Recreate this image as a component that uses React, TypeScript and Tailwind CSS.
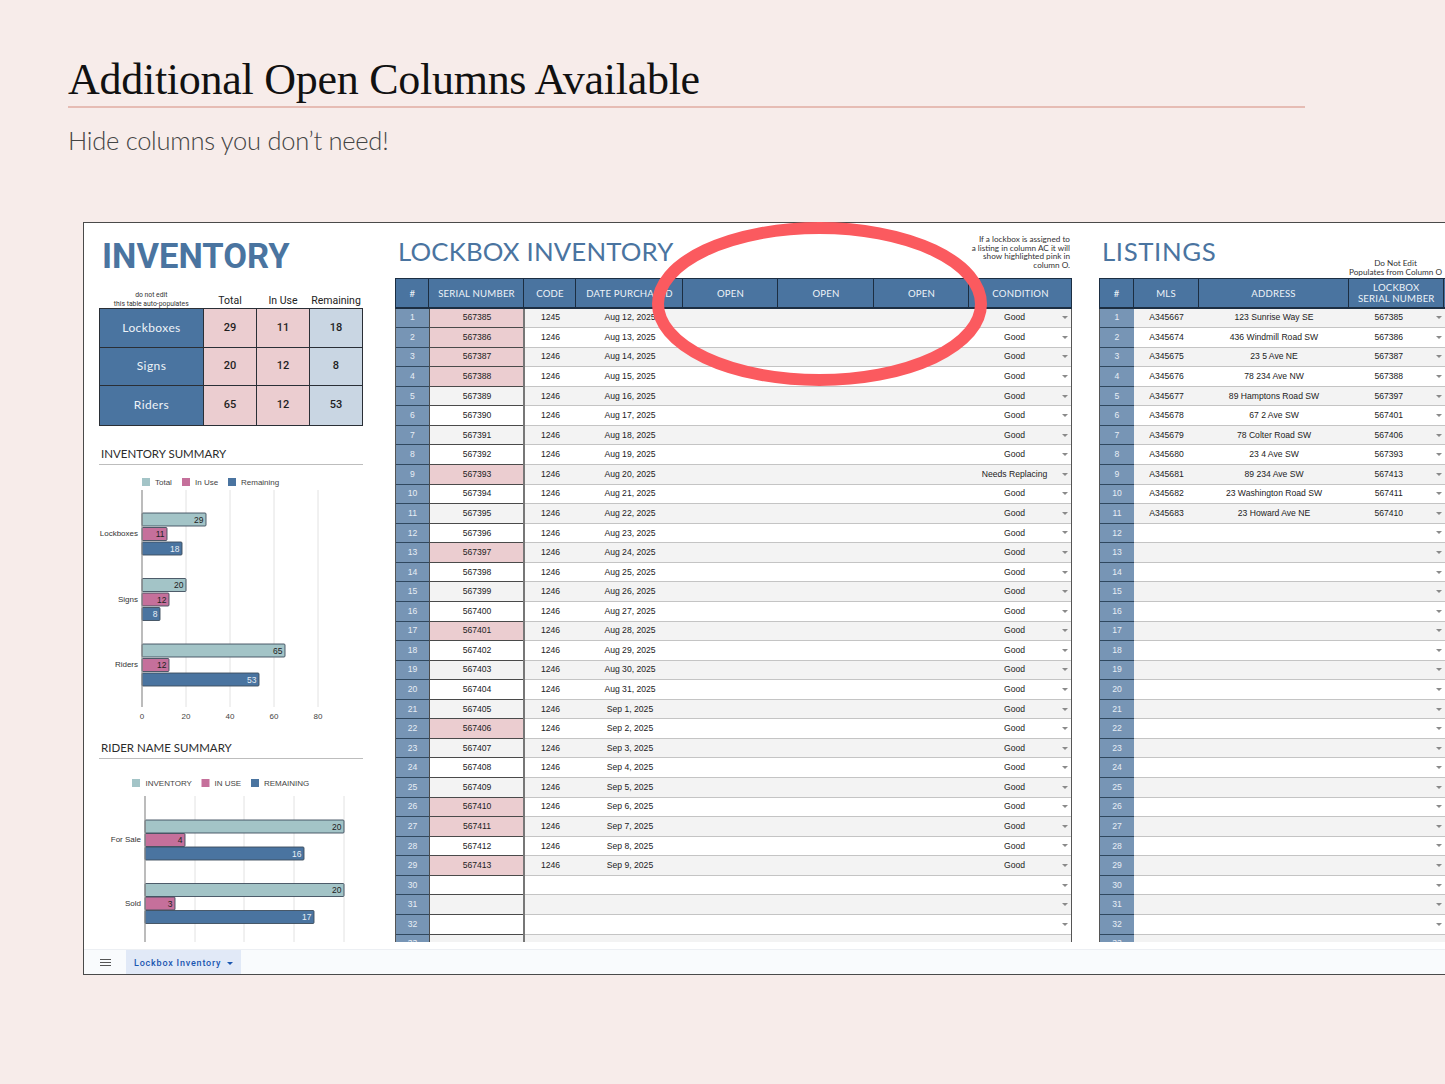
const SANS = "font-['Liberation_Sans',Arial,sans-serif]";
const ROUND = "font-['Lato','Open_Sans',sans-serif]";

const PINK_ROWS = [1, 2, 3, 4, 9, 13, 17, 22, 26, 27, 29];

const listings = [
  ["A345667", "123 Sunrise Way SE", "567385"],
  ["A345674", "436 Windmill Road SW", "567386"],
  ["A345675", "23 5 Ave NE", "567387"],
  ["A345676", "78 234 Ave NW", "567388"],
  ["A345677", "89 Hamptons Road SW", "567397"],
  ["A345678", "67 2 Ave SW", "567401"],
  ["A345679", "78 Colter Road SW", "567406"],
  ["A345680", "23 4 Ave SW", "567393"],
  ["A345681", "89 234 Ave SW", "567413"],
  ["A345682", "23 Washington Road SW", "567411"],
  ["A345683", "23 Howard Ave NE", "567410"],
];

const purchaseDate = (n: number) =>
  n <= 20 ? `Aug ${n + 11}, 2025` : `Sep ${n - 20}, 2025`;

const Arrow = () => (
  <svg width="6" height="3" viewBox="0 0 6 3" className="shrink-0">
    <path d="M0 0h6L3 3z" fill="#8a8a8a" />
  </svg>
);

const summary = [
  ["Lockboxes", "29", "11", "18"],
  ["Signs", "20", "12", "8"],
  ["Riders", "65", "12", "53"],
];

const Bar = ({
  x,
  y,
  w,
  fill,
  label,
  light,
}: {
  x: number;
  y: number;
  w: number;
  fill: string;
  label: string;
  light?: boolean;
}) => (
  <g>
    <rect x={x} y={y + 0.5} width={w} height={13} rx="1" fill={fill} stroke="#3d4d5c" strokeWidth="0.9" />
    <text
      x={x + w - 2.5}
      y={y + 10}
      textAnchor="end"
      fontSize="8.5"
      fill={light ? "#e8eef5" : "#222"}
    >
      {label}
    </text>
  </g>
);

const InventoryChart = () => (
  <svg width="311" height="274" viewBox="84 465 311 274" className="block font-['Liberation_Sans',Arial,sans-serif]">
    <rect x="142" y="478" width="8" height="8" fill="#a3c4c7" />
    <text x="155" y="485" fontSize="8" fill="#444">Total</text>
    <rect x="182" y="478" width="8" height="8" fill="#c5709b" />
    <text x="195" y="485" fontSize="8" fill="#444">In Use</text>
    <rect x="228" y="478" width="8" height="8" fill="#4a74a0" />
    <text x="241" y="485" fontSize="8" fill="#444">Remaining</text>
    {[186, 230, 274, 318].map((x) => (
      <line key={x} x1={x} y1="490" x2={x} y2="707" stroke="#e2e2e2" />
    ))}
    <Bar x={142} y={512.5} w={64} fill="#a3c4c7" label="29" />
    <Bar x={142} y={527} w={25} fill="#c5709b" label="11" />
    <Bar x={142} y={541.5} w={40} fill="#4a74a0" label="18" light />
    <Bar x={142} y={578} w={44} fill="#a3c4c7" label="20" />
    <Bar x={142} y={592.5} w={27} fill="#c5709b" label="12" />
    <Bar x={142} y={607} w={18} fill="#4a74a0" label="8" light />
    <Bar x={142} y={643.5} w={143} fill="#a3c4c7" label="65" />
    <Bar x={142} y={658} w={27} fill="#c5709b" label="12" />
    <Bar x={142} y={672.5} w={117} fill="#4a74a0" label="53" light />
    <line x1="142" y1="490" x2="142" y2="707" stroke="#8f8f8f" strokeWidth="1.2" />
    <text x="138" y="536" textAnchor="end" fontSize="8" fill="#333">Lockboxes</text>
    <text x="138" y="602" textAnchor="end" fontSize="8" fill="#333">Signs</text>
    <text x="138" y="667" textAnchor="end" fontSize="8" fill="#333">Riders</text>
    {[0, 20, 40, 60, 80].map((n, i) => (
      <text key={n} x={142 + i * 44} y="719" textAnchor="middle" fontSize="8" fill="#444">
        {n}
      </text>
    ))}
  </svg>
);

const RiderChart = () => (
  <svg width="311" height="183" viewBox="84 759 311 183" className="block font-['Liberation_Sans',Arial,sans-serif]">
    <rect x="132" y="779" width="8" height="8" fill="#a3c4c7" />
    <text x="145.5" y="786" fontSize="8" fill="#444">INVENTORY</text>
    <rect x="201.5" y="779" width="8" height="8" fill="#c5709b" />
    <text x="214.5" y="786" fontSize="8" fill="#444">IN USE</text>
    <rect x="251" y="779" width="8" height="8" fill="#4a74a0" />
    <text x="264" y="786" fontSize="8" fill="#444">REMAINING</text>
    {[195, 244, 294, 344].map((x) => (
      <line key={x} x1={x} y1="796" x2={x} y2="942" stroke="#e2e2e2" />
    ))}
    <Bar x={145} y={819.5} w={199} fill="#a3c4c7" label="20" />
    <Bar x={145} y={833} w={40} fill="#c5709b" label="4" />
    <Bar x={145} y={846.5} w={159} fill="#4a74a0" label="16" light />
    <Bar x={145} y={883} w={199} fill="#a3c4c7" label="20" />
    <Bar x={145} y={896.5} w={30} fill="#c5709b" label="3" />
    <Bar x={145} y={910} w={169} fill="#4a74a0" label="17" light />
    <line x1="145" y1="796" x2="145" y2="942" stroke="#8f8f8f" strokeWidth="1.2" />
    <text x="141" y="842" textAnchor="end" fontSize="8" fill="#333">For Sale</text>
    <text x="141" y="906" textAnchor="end" fontSize="8" fill="#333">Sold</text>
  </svg>
);

const LeftPanel = () => (
  <div className="w-[311px] shrink-0 px-[15px]">
    <div className="h-[56px] pl-[3px] pt-[10px]">
      <h2 className="font-['Roboto',sans-serif] text-[34.5px] leading-[46px] font-bold text-[#4a74a0]">
        INVENTORY
      </h2>
    </div>
    <div className="grid h-[29px] grid-cols-[104.5px_53px_53px_53px] items-end font-['Roboto',sans-serif] text-[10.5px] text-[#222]">
      <div className="text-center text-[6.8px] leading-[8.5px] text-[#333]">
        do not edit
        <br />
        this table auto-populates
      </div>
      <div className="text-center leading-[14px]">Total</div>
      <div className="text-center leading-[14px]">In Use</div>
      <div className="text-center leading-[14px]">Remaining</div>
    </div>
    <div className="w-[264px] border border-[#2a2f36]">
      {summary.map((row, i) => (
        <div
          key={row[0]}
          className={`grid h-[38.6px] grid-cols-[104px_53px_53px_52px] text-[11px] text-[#1f1f1f] ${
            i < 2 ? "border-b border-[#2a2f36]" : ""
          }`}
        >
          <div className={`${ROUND} flex items-center justify-center border-r border-[#2a2f36] bg-[#4a74a0] text-[12px] tracking-[0.4px] text-[#eef3f8]`}>
            {row[0]}
          </div>
          <div className="flex items-center justify-center border-r border-[#2a2f36] bg-[#ebcdd0] font-['Roboto',sans-serif] font-medium">
            {row[1]}
          </div>
          <div className="flex items-center justify-center border-r border-[#2a2f36] bg-[#ebcdd0] font-['Roboto',sans-serif] font-medium">
            {row[2]}
          </div>
          <div className="flex items-center justify-center bg-[#c9d6e3] font-['Roboto',sans-serif] font-medium">
            {row[3]}
          </div>
        </div>
      ))}
    </div>
    <div className={`${ROUND} mt-[19.2px] h-[20px] w-[264px] border-b border-[#bdbdbd] pl-[2px] text-[11.5px] leading-[17px] text-[#2b2b2b]`}>
      INVENTORY SUMMARY
    </div>
    <div className="-mx-[15px]">
      <InventoryChart />
    </div>
    <div className={`${ROUND} h-[20px] w-[264px] border-b border-[#bdbdbd] pl-[2px] text-[11.5px] leading-[18px] text-[#2b2b2b]`}>
      RIDER NAME SUMMARY
    </div>
    <div className="-mx-[15px]">
      <RiderChart />
    </div>
  </div>
);

const HeaderCell = ({ children, last }: { children: React.ReactNode; last?: boolean }) => (
  <div
    className={`flex items-center justify-center pt-[2px] pl-[1px] text-center ${
      last ? "" : "border-r border-[#1c2e42]"
    }`}
  >
    {children}
  </div>
);

const headerRow = `${ROUND} h-[30.5px] border border-b-2 border-[#1c2e42] bg-[#4a74a0] text-[9.6px] leading-[10.5px] tracking-[0.2px] text-[#eef3f8]`;
const rowBg = (n: number) => (n % 2 === 1 ? "bg-[#f3f3f3]" : "bg-white");

const LockboxTable = () => (
  <div className="w-[704px] shrink-0">
    <div className="flex h-[55px] w-[677px] items-start justify-between">
      <h2 className={`${ROUND} mt-[10px] pl-[3px] text-[25.8px] leading-[36px] tracking-[0.15px] text-[#4a74a0]`}>
        LOCKBOX INVENTORY
      </h2>
      <p className={`${ROUND} mt-[12px] pr-[2px] text-right text-[8.2px] leading-[8.6px] text-[#333]`}>
        If a lockbox is assigned to
        <br />
        a listing in column AC it will
        <br />
        show highlighted pink in
        <br />
        column O.
      </p>
    </div>
    <div className={`${headerRow} grid w-[677px] grid-cols-[33px_95px_52px_107px_95px_96px_95px_1fr]`}>
      <HeaderCell>#</HeaderCell>
      <HeaderCell>SERIAL NUMBER</HeaderCell>
      <HeaderCell>CODE</HeaderCell>
      <HeaderCell>DATE PURCHASED</HeaderCell>
      <HeaderCell>OPEN</HeaderCell>
      <HeaderCell>OPEN</HeaderCell>
      <HeaderCell>OPEN</HeaderCell>
      <HeaderCell last>CONDITION</HeaderCell>
    </div>
    {Array.from({ length: 33 }, (_, i) => i + 1).map((n) => {
      const filled = n <= 29;
      return (
        <div
          key={n}
          className={`${SANS} grid h-[19.57px] w-[677px] grid-cols-[33px_94px_2px_51px_107px_95px_96px_95px_1fr] border-r border-l border-[#555] text-[8.6px] text-[#222] ${rowBg(n)}`}
        >
          <div className="flex items-center justify-center border-b border-[#30485f] bg-[#7795b5] text-[#e8eef5]">{n}</div>
          <div
            className={`flex items-center justify-center border-b border-l border-[#4a4a4a] pl-[1px] ${
              PINK_ROWS.includes(n) ? "bg-[#ebcdd0]" : ""
            }`}
          >
            {filled ? 567384 + n : ""}
          </div>
          <div className="bg-[#777]" />
          <div className="flex items-center justify-center border-b border-[#c4c4c4]">
            {filled ? (n === 1 ? "1245" : "1246") : ""}
          </div>
          <div className="flex items-center justify-center border-b border-[#c4c4c4] pl-[1px]">
            {filled ? purchaseDate(n) : ""}
          </div>
          <div className="border-b border-[#c4c4c4]" />
          <div className="border-b border-[#c4c4c4]" />
          <div className="border-b border-[#c4c4c4]" />
          <div className="flex items-center justify-end border-b border-[#c4c4c4] pr-[3px]">
            <span className="flex-1 pr-[2px] text-center whitespace-nowrap">
              {!filled ? "" : n === 9 ? "Needs Replacing" : "Good"}
            </span>
            <Arrow />
          </div>
        </div>
      );
    })}
  </div>
);

const ListingsTable = () => (
  <div className="w-[346px] shrink-0">
    <div className="flex h-[55px] w-[344px] items-start justify-between">
      <h2 className={`${ROUND} mt-[10px] pl-[3px] text-[25.8px] leading-[36px] tracking-[0.6px] text-[#4a74a0]`}>
        LISTINGS
      </h2>
      <p className={`${ROUND} mt-[36px] pr-[1px] text-center text-[8.2px] leading-[8.6px] text-[#333]`}>
        Do Not Edit
        <br />
        Populates from Column O
      </p>
    </div>
    <div className={`${headerRow} grid w-[360px] grid-cols-[33.5px_65px_150px_95.5px_1fr]`}>
      <HeaderCell>#</HeaderCell>
      <HeaderCell>MLS</HeaderCell>
      <HeaderCell>ADDRESS</HeaderCell>
      <HeaderCell>
        LOCKBOX
        <br />
        SERIAL NUMBER
      </HeaderCell>
      <HeaderCell last>{""}</HeaderCell>
    </div>
    {Array.from({ length: 33 }, (_, i) => i + 1).map((n) => {
      const row = listings[n - 1];
      return (
        <div
          key={n}
          className={`${SANS} grid h-[19.57px] w-[360px] grid-cols-[34px_65px_150px_95.5px_1fr] border-l border-[#555] text-[8.6px] text-[#222] ${rowBg(n)}`}
        >
          <div className="flex items-center justify-center border-b border-[#30485f] bg-[#7795b5] text-[#e8eef5]">{n}</div>
          <div className="flex items-center justify-center border-b border-[#c4c4c4]">{row?.[0]}</div>
          <div className="flex items-center justify-center border-b border-[#c4c4c4] whitespace-nowrap">{row?.[1]}</div>
          <div className="flex items-center border-b border-[#c4c4c4] pr-[3px]">
            <span className="flex-1 pr-[7px] text-center">{row?.[2]}</span>
            <Arrow />
          </div>
          <div className="border-b border-[#c4c4c4]" />
        </div>
      );
    })}
  </div>
);

const App = () => (
  <div className="relative h-[1084px] w-full overflow-hidden bg-[#f7ecea]">
    <header className="pt-[52px] pl-[68px]">
      <h1 className="h-[56px] w-[1237px] border-b-2 border-[#e6bcb4] font-['Liberation_Serif',serif] text-[44px] leading-[55px] tracking-[-0.27px] text-[#111]">
        Additional Open Columns Available
      </h1>
      <p className="mt-[17px] font-['Lato',sans-serif] text-[25.5px] leading-[30px] font-light tracking-[-0.27px] text-[#444]">
        Hide columns you don’t need!
      </p>
    </header>

    <div className="mt-[67px] ml-[83px] flex h-[753px] flex-col overflow-hidden border border-r-0 border-[#4a4a4a] bg-white">
      <div className="flex h-[719px] shrink-0 overflow-hidden">
        <LeftPanel />
        <LockboxTable />
        <ListingsTable />
      </div>
      <div className="mt-[7px] flex h-[25px] items-center border-t border-[#eceff3] bg-[#f9fbfd]">
        <div className="flex w-[42px] justify-center pt-[1px] pl-[1px]">
          <svg width="11" height="7" viewBox="0 0 11 7">
            <path d="M0 .5h11M0 3.5h11M0 6.5h11" stroke="#555" strokeWidth="1" />
          </svg>
        </div>
        <div className="flex h-full w-[115px] items-center gap-[6px] bg-[#e1e9f7] pt-[3px] pl-[8px] font-['Roboto',sans-serif] text-[9px] font-medium tracking-[0.8px] text-[#1a56b0]">
          Lockbox Inventory
          <svg width="6" height="3" viewBox="0 0 6 3">
            <path d="M0 0h6L3 3z" fill="#1a56b0" />
          </svg>
        </div>
      </div>
    </div>

    {/* red marker circle around the open columns */}
    <svg
      width="340"
      height="168"
      viewBox="0 0 340 168"
      className="absolute top-[220px] left-[650px]"
    >
      <ellipse cx="169.5" cy="84" rx="161.5" ry="76" fill="none" stroke="#fb5a5f" strokeWidth="12" />
    </svg>
  </div>
);

export default App;
